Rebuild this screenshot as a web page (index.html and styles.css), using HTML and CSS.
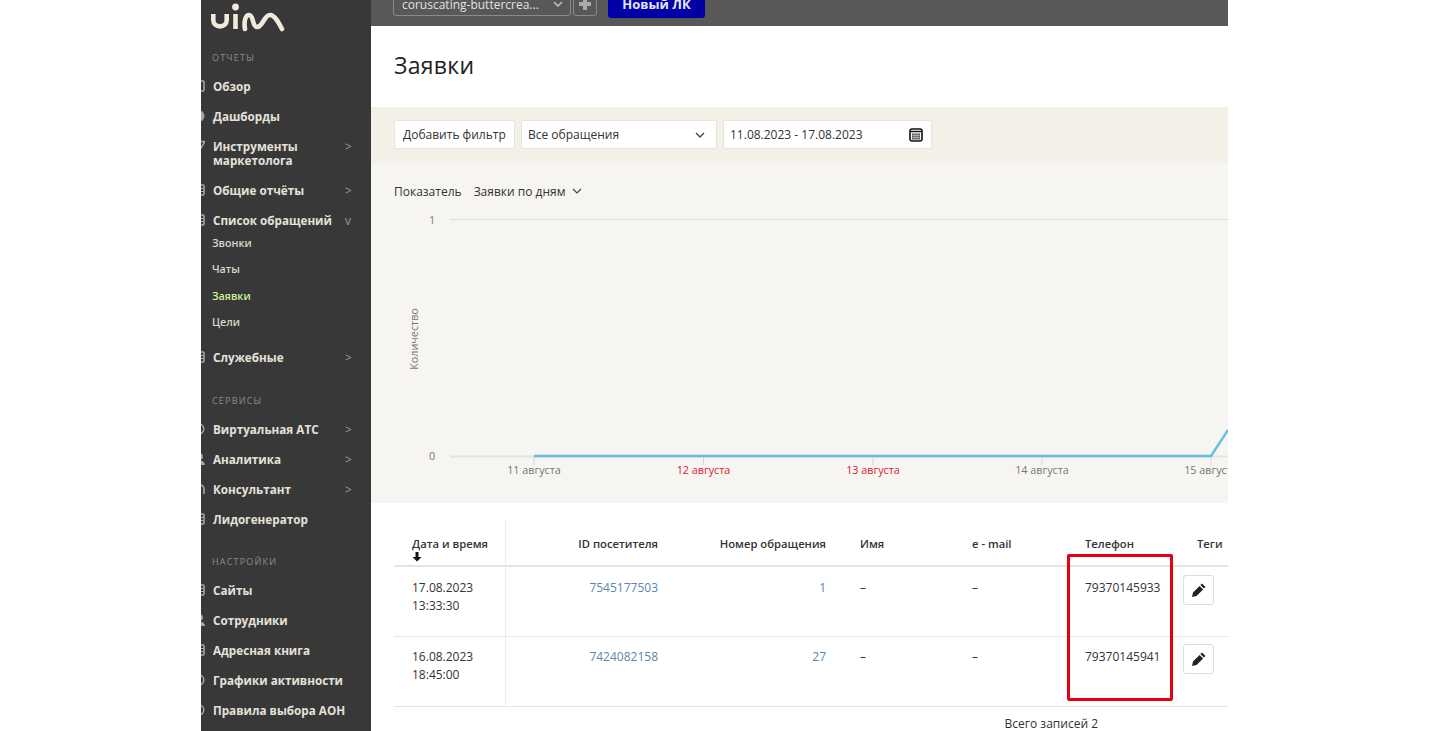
FILE: index.html
```html
<!DOCTYPE html>
<html lang="ru">
<head>
    <meta charset="UTF-8">
    <title>Заявки</title>
    <link rel="stylesheet" href="styles.css">
</head>

<body>
    <svg class="defs" width="0" height="0">
        <symbol id="i-box" viewBox="0 0 12 12"><rect x="1" y="1" width="10" height="10" rx="1" fill="none" stroke="currentColor" stroke-width="1.5"/></symbol>
        <symbol id="i-list" viewBox="0 0 12 12"><rect x="1" y="1" width="10" height="10" rx="1" fill="none" stroke="currentColor" stroke-width="1.5"/><path d="M1 4.500h10M1 7.500h10" stroke="currentColor"/></symbol>
        <symbol id="i-disc" viewBox="0 0 12 12"><circle cx="6" cy="6" r="5.500" fill="currentColor"/></symbol>
        <symbol id="i-ring" viewBox="0 0 12 12"><circle cx="6" cy="6" r="4.800" fill="none" stroke="currentColor" stroke-width="1.400"/><circle cx="6" cy="6" r="2" fill="currentColor"/></symbol>
        <symbol id="i-tri" viewBox="0 0 12 12"><path d="M0 1.500h12L8 8z" fill="none" stroke="currentColor" stroke-width="1.500"/></symbol>
        <symbol id="i-user" viewBox="0 0 12 12"><circle cx="7" cy="3.500" r="3" fill="currentColor"/><path d="M0 12c0-3.500 3-5 5.500-5s6.500 1.500 6.500 5z" fill="currentColor"/></symbol>
        <symbol id="i-arc" viewBox="0 0 12 12"><path d="M3 11V6a4 4 0 0 1 8 0v5" fill="none" stroke="currentColor" stroke-width="1.600"/></symbol>
    </svg>

    <div class="frame">
        <aside class="sidebar">
            <div class="logo">
                <svg width="90" height="40" viewBox="0 0 90 40">
                    <g fill="none" stroke="#f2e9da" stroke-width="4.600">
                        <path d="M14.300 15v6c0 8.500 13.400 8.500 13.400 0v-6"/>
                        <path d="M36.500 15v15"/>
                        <path d="M46 30C44.500 21 47 16 50 16 55 16 53 28 58 28 64 28 65 16 71 16 76 16 80 24 83 30" stroke-linecap="round"/>
                    </g>
                    <circle cx="36.500" cy="8" r="3.400" fill="#f2e9da"/>
                </svg>
            </div>

            <div class="side-label">Отчеты</div>
            <a class="side-item"><svg class="side-icon"><use href="#i-box"/></svg>Обзор</a>
            <a class="side-item"><svg class="side-icon"><use href="#i-disc"/></svg>Дашборды</a>
            <a class="side-item"><svg class="side-icon"><use href="#i-tri"/></svg><span class="side-text">Инструменты маркетолога</span><i class="side-arrow">&gt;</i></a>
            <a class="side-item"><svg class="side-icon"><use href="#i-list"/></svg>Общие отчёты<i class="side-arrow">&gt;</i></a>
            <a class="side-item"><svg class="side-icon"><use href="#i-list"/></svg>Список обращений<i class="side-arrow">v</i></a>
            <div class="side-sub">
                <a>Звонки</a>
                <a>Чаты</a>
                <a class="active">Заявки</a>
                <a>Цели</a>
            </div>
            <a class="side-item"><svg class="side-icon"><use href="#i-list"/></svg>Служебные<i class="side-arrow">&gt;</i></a>

            <div class="side-label">Сервисы</div>
            <a class="side-item"><svg class="side-icon"><use href="#i-ring"/></svg>Виртуальная АТС<i class="side-arrow">&gt;</i></a>
            <a class="side-item"><svg class="side-icon"><use href="#i-user"/></svg>Аналитика<i class="side-arrow">&gt;</i></a>
            <a class="side-item"><svg class="side-icon"><use href="#i-arc"/></svg>Консультант<i class="side-arrow">&gt;</i></a>
            <a class="side-item"><svg class="side-icon"><use href="#i-list"/></svg>Лидогенератор</a>

            <div class="side-label second">Настройки</div>
            <a class="side-item"><svg class="side-icon"><use href="#i-list"/></svg>Сайты</a>
            <a class="side-item"><svg class="side-icon"><use href="#i-user"/></svg>Сотрудники</a>
            <a class="side-item"><svg class="side-icon"><use href="#i-list"/></svg>Адресная книга</a>
            <a class="side-item"><svg class="side-icon"><use href="#i-ring"/></svg>Графики активности</a>
            <a class="side-item"><svg class="side-icon"><use href="#i-ring"/></svg>Правила выбора АОН</a>
        </aside>

        <main class="main">
            <div class="topbar">
                <div class="site-select">
                    <span>coruscating-buttercrea...</span>
                    <svg width="10" height="6" viewBox="0 0 10 6"><path d="M1 1l4 4 4-4" fill="none" stroke="#ccc" stroke-width="1.300"/></svg>
                </div>
                <div class="site-add">
                    <svg width="14" height="14" viewBox="0 0 14 14"><path d="M7 1v12M1 7h12" stroke="#aaa" stroke-width="4"/></svg>
                </div>
                <div class="new-lk">Новый ЛК</div>
            </div>

            <h1 class="page-title">Заявки</h1>

            <div class="filters">
                <div class="field add-filter">Добавить фильтр</div>
                <div class="field type-select">
                    <span>Все обращения</span>
                    <svg width="10" height="6" viewBox="0 0 10 6"><path d="M1 1l4 4 4-4" fill="none" stroke="#444" stroke-width="1.300"/></svg>
                </div>
                <div class="field date-range">
                    <span>11.08.2023 - 17.08.2023</span>
                    <svg width="14" height="14" viewBox="0 0 14 14">
                        <rect x="1" y="1" width="12" height="12" rx="2" fill="#fff" stroke="#111" stroke-width="1.600"/>
                        <path d="M1 3.500h12" stroke="#111" stroke-width="1.400"/>
                        <rect x="3" y="5.500" width="8" height="6" fill="#555"/>
                        <path d="M3 7.500h8M3 9.500h8M5 5.500v6M7 5.500v6M9 5.500v6" stroke="#ddd" stroke-width=".5"/>
                    </svg>
                </div>
            </div>

            <section class="chart-box">
                <div class="metric">
                    <span>Показатель</span>
                    <span class="metric-value">Заявки по дням</span>
                    <svg width="10" height="6" viewBox="0 0 10 6"><path d="M1 1l4 4 4-4" fill="none" stroke="#444" stroke-width="1.200"/></svg>
                </div>
                <svg class="chart" width="857" height="304" viewBox="0 0 857 304">
                    <path d="M79 20.500h778" stroke="#dfdedb"/>
                    <path d="M79 257.500h778" stroke="#e4e3e0" stroke-width="2"/>
                    <path d="M163 257v9M332.500 257v9M502 257v9M671 257v9M840 257v9" stroke="#cfd6dc"/>
                    <path d="M163 257h677L857 231" fill="none" stroke="#62c0e0" stroke-width="2.400"/>
                    <text class="tick" x="61" y="24.500" text-anchor="middle">1</text>
                    <text class="tick" x="61" y="261" text-anchor="middle">0</text>
                    <text class="tick" x="163" y="275" text-anchor="middle">11 августа</text>
                    <text class="tick red" x="332.500" y="275" text-anchor="middle">12 августа</text>
                    <text class="tick red" x="502" y="275" text-anchor="middle">13 августа</text>
                    <text class="tick" x="671" y="275" text-anchor="middle">14 августа</text>
                    <text class="tick" x="840" y="275" text-anchor="middle">15 августа</text>
                    <text class="tick" transform="translate(47 140) rotate(-90)" text-anchor="middle">Количество</text>
                </svg>
            </section>

            <section class="requests">
                <table class="req-table">
                    <colgroup>
                        <col class="c-date"><col class="c-id"><col class="c-num"><col class="c-name"><col class="c-mail"><col class="c-phone"><col class="c-tags">
                    </colgroup>
                    <thead>
                        <tr>
                            <th class="date-cell">Дата и время
                                <svg class="sort" width="10" height="10" viewBox="0 0 10 10"><path d="M3.500 0h3v5H9.500L5 9.500.5 5h3z" fill="#111"/></svg>
                            </th>
                            <th class="num">ID посетителя</th>
                            <th class="num">Номер обращения</th>
                            <th class="name">Имя</th>
                            <th>e - mail</th>
                            <th>Телефон</th>
                            <th class="name">Теги</th>
                        </tr>
                    </thead>
                    <tbody>
                        <tr>
                            <td class="date-cell">17.08.2023<br>13:33:30</td>
                            <td class="num"><a>7545177503</a></td>
                            <td class="num"><a>1</a></td>
                            <td class="name">–</td>
                            <td>–</td>
                            <td>79370145933</td>
                            <td class="tag-cell"><button class="edit"><svg width="16" height="16" viewBox="0 0 16 16"><path d="M11 1.500l3.500 3.500-1.600 1.600-3.500-3.500zM8.600 3.900l3.500 3.500-6.600 6.600-4.500 1 1-4.500z" fill="#222"/></svg></button></td>
                        </tr>
                        <tr>
                            <td class="date-cell">16.08.2023<br>18:45:00</td>
                            <td class="num"><a>7424082158</a></td>
                            <td class="num"><a>27</a></td>
                            <td class="name">–</td>
                            <td>–</td>
                            <td>79370145941</td>
                            <td class="tag-cell"><button class="edit"><svg width="16" height="16" viewBox="0 0 16 16"><path d="M11 1.500l3.500 3.500-1.600 1.600-3.500-3.500zM8.600 3.900l3.500 3.500-6.600 6.600-4.500 1 1-4.500z" fill="#222"/></svg></button></td>
                        </tr>
                    </tbody>
                </table>
                <div class="total">Всего записей 2</div>
                <div class="highlight"></div>
            </section>
        </main>
    </div>
</body>
</html>
```

FILE: styles.css
```css
html, body {
    margin: 0;
    height: 731px;
    overflow: hidden;
    background-color: #fff;
}
body {
    font-family: "Open Sans", sans-serif;
    font-size: 12px;
    color: #333;
}
.defs {
    position: absolute;
}
.frame {
    display: flex;
    width: 1027px;
    height: 731px;
    margin-left: 201px;
    overflow: hidden;
}

/* боковое меню */
.sidebar {
    flex: 0 0 170px;
    box-sizing: border-box;
    background-color: #393838;
    overflow: hidden;
    color: #e4e1da;
}
.logo {
    height: 50px;
}
.logo svg {
    display: block;
    margin-top: -1px;
    margin-left: -2px;
}
.side-label {
    margin: 22px 0 6px 11px;
    font-size: 9px;
    line-height: 14px;
    letter-spacing: 1.200px;
    text-transform: uppercase;
    color: #8c8b88;
}
.logo + .side-label {
    margin-top: 2px;
}
.side-label.second {
    margin-top: 21px;
}
.side-item {
    position: relative;
    display: flex;
    align-items: flex-start;
    padding: 8px 0;
    font-size: 11.700px;
    font-weight: 700;
    line-height: 14px;
}
.side-icon {
    flex: none;
    width: 12px;
    height: 12px;
    margin: 1px 8px 0 -8px;
    color: #a8a6a2;
}
.side-text {
    width: 110px;
}
.side-arrow {
    position: absolute;
    top: 9px;
    left: 144px;
    font-style: normal;
    font-weight: 400;
    font-size: 12px;
    color: #9a9996;
}
.side-sub {
    margin: -5px 0 7px 11px;
}
.side-sub a {
    display: block;
    height: 26.300px;
    font-size: 10.700px;
    font-weight: 600;
    line-height: 26px;
    color: #d8d6cf;
}
.side-sub a.active {
    color: #c9f29b;
}

.main {
    flex: 1;
    min-width: 0;
}
.topbar {
    display: flex;
    align-items: flex-end;
    height: 26px;
    box-sizing: border-box;
    padding: 0 0 10px 22px;
    background-color: #585858;
    overflow: hidden;
}
.site-select {
    display: flex;
    align-items: center;
    justify-content: space-between;
    flex: none;
    width: 178px;
    height: 24px;
    box-sizing: border-box;
    padding: 0 7px 0 8px;
    border: 1px solid #8a8a8a;
    border-radius: 3px;
    font-size: 12px;
    color: #e2e2e2;
}
.site-add {
    display: flex;
    align-items: center;
    justify-content: center;
    flex: none;
    width: 24px;
    height: 24px;
    box-sizing: border-box;
    margin: 0 11px 0 2px;
    border: 1px solid #8a8a8a;
    border-radius: 3px;
}
.new-lk {
    flex: none;
    width: 97px;
    height: 28px;
    margin-bottom: -2px;
    line-height: 28px;
    text-align: center;
    background-color: #0000a6;
    border-radius: 3px;
    font-size: 13px;
    font-weight: 700;
    color: #e6e6f5;
}
.page-title {
    height: 81px;
    margin: 0;
    padding-left: 23px;
    font-size: 23px;
    font-weight: 400;
    line-height: 79px;
    letter-spacing: .3px;
    color: #222;
}

.filters {
    display: flex;
    gap: 6px;
    height: 56px;
    box-sizing: border-box;
    padding: 13px 0 0 23px;
    background-color: #f3f0e8;
}
.field {
    display: flex;
    align-items: center;
    justify-content: space-between;
    height: 29px;
    box-sizing: border-box;
    padding: 0 8px;
    background-color: #fff;
    border: 1px solid #e6e4de;
    border-radius: 2px;
}
.add-filter {
    width: 121px;
}
.type-select {
    width: 196px;
    padding-left: 6px;
    padding-right: 11px;
}
.date-range {
    width: 209px;
    padding-left: 6px;
}

.chart-box {
    height: 340px;
    box-sizing: border-box;
    padding-top: 20px;
    background-color: #f6f5f1;
}
.metric {
    display: flex;
    align-items: center;
    height: 16px;
    padding-left: 23px;
}
.metric-value {
    margin: 0 7px 0 12px;
}
.chart {
    display: block;
}
.tick {
    font-family: "Open Sans", sans-serif;
    font-size: 10.800px;
    fill: #777;
}
.tick.red {
    fill: #e0162b;
}

.requests {
    position: relative;
    padding: 17px 0 0 23px;
}
.req-table {
    table-layout: fixed;
    width: 834px;
    border-collapse: separate;
    border-spacing: 0;
}
.c-date { width: 112px; }
.c-id { width: 162px; }
.c-num { width: 168px; }
.c-name { width: 124px; }
.c-mail { width: 113px; }
.c-phone { width: 100px; }
.c-tags { width: 55px; }
.req-table th {
    height: 47px;
    box-sizing: border-box;
    padding: 16px 10px 0 12px;
    border-bottom: 2px solid #e4e4e4;
    font-size: 11.250px;
    font-weight: 600;
    line-height: 16px;
    text-align: left;
    vertical-align: top;
    color: #333;
}
.req-table td {
    height: 69px;
    box-sizing: border-box;
    padding: 12px 10px 0 12px;
    line-height: 18px;
    vertical-align: top;
}
.req-table tbody tr + tr td {
    height: 71px;
    padding-top: 11px;
    border-top: 1px solid #e9e9e9;
    border-bottom: 1px solid #e4e4e4;
}
.req-table .date-cell {
    padding-left: 18px;
    border-right: 1px solid #ececec;
}
.req-table .num {
    text-align: right;
}
.req-table .name {
    padding-left: 24px;
}
.req-table a {
    color: #5b86b0;
}
.req-table .tag-cell {
    padding: 8px 0 0 10px;
}
.req-table tbody tr + tr .tag-cell {
    padding-top: 7px;
}
.sort {
    display: block;
}
.edit {
    display: flex;
    align-items: center;
    justify-content: center;
    width: 31px;
    height: 30px;
    padding: 0;
    background-color: #fff;
    border: 1px solid #ddd;
    border-radius: 3px;
}
.total {
    padding: 9px 130px 0 0;
    line-height: 16px;
    text-align: right;
}
.highlight {
    position: absolute;
    top: 51px;
    left: 696px;
    width: 106px;
    height: 147px;
    box-sizing: border-box;
    border: 3px solid #e3000f;
    border-radius: 2px;
}
```
